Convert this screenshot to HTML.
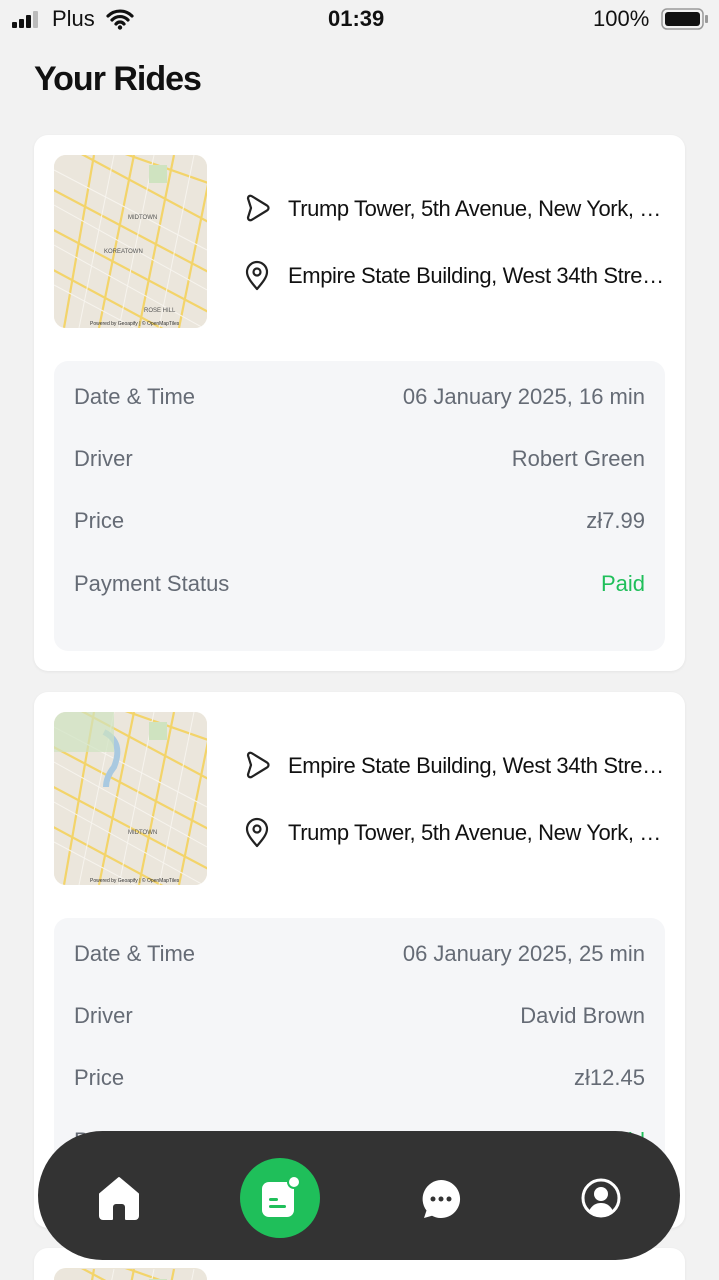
<!DOCTYPE html>
<html style="width:719px;height:1280px;overflow:hidden"><head><meta charset="utf-8"><style>
*{margin:0;padding:0;box-sizing:border-box}
body{width:719px;height:1280px;background:#f2f2f2;font-family:"Liberation Sans",sans-serif;position:relative;overflow:hidden;color:#111}
.abs{position:absolute}
.card{position:absolute;left:34px;width:651px;height:536px;background:#fff;border-radius:14px;box-shadow:0 1px 3px rgba(0,0,0,.06);overflow:hidden}
.map{position:absolute;left:20px;top:20px;width:153px;height:173px;border-radius:12px;overflow:hidden;background:#ece6d8}
.addr{position:absolute;left:254px;width:384px;font-size:22px;letter-spacing:-0.4px;white-space:nowrap;overflow:hidden;text-overflow:ellipsis;color:#111}
.ico{position:absolute;left:208px}
.det{position:absolute;left:20px;top:226px;width:611px;height:290px;background:#f5f6f8;border-radius:14px}
.row{position:absolute;left:20px;right:20px;font-size:22px;color:#656b75;letter-spacing:0}
.row span{position:absolute;right:0;top:0}
.paid{color:#1fbf5a}
</style></head><body>
<div class="abs" style="left:12px;top:11px">
<svg width="34" height="18"><rect x="0" y="11" width="5" height="6" rx="1" fill="#111"/><rect x="7" y="8" width="5" height="9" rx="1" fill="#111"/><rect x="14" y="4" width="5" height="13" rx="1" fill="#111"/><rect x="21" y="0" width="5" height="17" rx="1" fill="#bbb"/></svg></div>
<div class="abs" style="left:52px;top:6px;font-size:22px">Plus</div>
<svg class="abs" style="left:106px;top:8px" width="28" height="22" viewBox="0 0 28 22"><path d="M2 8a17 17 0 0 1 24 0M6 12a11 11 0 0 1 16 0M10 16a5 5 0 0 1 8 0" stroke="#111" stroke-width="3.2" fill="none" stroke-linecap="round"/><circle cx="14" cy="19.5" r="2.2" fill="#111"/></svg>
<div class="abs" style="left:328px;top:6px;font-size:22px;font-weight:bold">01:39</div>
<div class="abs" style="left:593px;top:6px;font-size:22px">100%</div>
<svg class="abs" style="left:661px;top:8px" width="48" height="22"><rect x="1" y="1" width="41" height="20" rx="5" fill="none" stroke="#999" stroke-width="1.5"/><rect x="4" y="4" width="35" height="14" rx="3" fill="#111"/><rect x="44" y="7" width="3" height="8" rx="1" fill="#999"/></svg>
<div class="abs" style="left:34px;top:60px;font-size:34px;font-weight:bold;letter-spacing:-1px">Your Rides</div>

<svg width="0" height="0" style="position:absolute"><defs>
<pattern id="mp" width="153" height="173" patternUnits="userSpaceOnUse">
<rect width="153" height="173" fill="#ebe6dc"/>
<g stroke="#f3d46a" stroke-width="2.2"><path d="M-10 30L160 120M-10 70L160 160M-10 110L120 180M20 -5L160 70M60 -5L160 30"/><path d="M40 0L10 173M80 0L45 173M120 0L85 173M160 0L125 173"/></g>
<g stroke="#f7f4ee" stroke-width="1"><path d="M0 15L153 95M0 50L153 135M0 90L153 175M0 130L100 183"/><path d="M60 0L25 173M100 0L65 173M140 0L105 173"/></g>
<rect x="95" y="10" width="18" height="18" fill="#cfe3c0"/>
</pattern></defs></svg>

<div class="card" style="top:135px">
<div class="map"><svg width="153" height="173"><rect width="153" height="173" fill="url(#mp)"/><text x="74" y="64" font-size="6" fill="#555" font-family="Liberation Sans">MIDTOWN</text><text x="50" y="98" font-size="6" fill="#555" font-family="Liberation Sans">KOREATOWN</text><text x="90" y="157" font-size="6" fill="#555" font-family="Liberation Sans">ROSE HILL</text><text x="36" y="170" font-size="5" fill="#333" font-family="Liberation Sans">Powered by Geoapify | © OpenMapTiles</text></svg></div>
<svg class="ico" style="top:58px" width="30" height="30" viewBox="0 0 30 30"><path d="M6 5.5C6 3 8 2 10 3.3L25 12.5c2 1.3 2 3.7 0 5L10 26.7C8 28 6 27 6 24.5L9 15z" fill="none" stroke="#222" stroke-width="2.2" stroke-linejoin="round"/></svg>
<div class="addr" style="top:61px">Trump Tower, 5th Avenue, New York, NY, USA</div>
<svg class="ico" style="top:125px" width="30" height="32" viewBox="0 0 30 32"><path d="M15 29C9 22 5 17 5 12a10 10 0 0 1 20 0c0 5-4 10-10 17z" fill="none" stroke="#222" stroke-width="2.2" stroke-linejoin="round"/><circle cx="15" cy="12" r="3.5" fill="none" stroke="#222" stroke-width="2.2"/></svg>
<div class="addr" style="top:128px">Empire State Building, West 34th Street, New York</div>
<div class="det">
<div class="row" style="top:23px">Date &amp; Time<span>06 January 2025, 16 min</span></div>
<div class="row" style="top:85px">Driver<span>Robert Green</span></div>
<div class="row" style="top:147px">Price<span>zł7.99</span></div>
<div class="row" style="top:210px">Payment Status<span class="paid">Paid</span></div>
</div></div>

<div class="card" style="top:692px">
<div class="map"><svg width="153" height="173"><rect width="153" height="173" fill="url(#mp)"/><path d="M50 20q20 10 10 35q-8 10-8 20" stroke="#a9c9e0" stroke-width="6" fill="none"/><rect x="0" y="0" width="60" height="40" fill="#cfe3c0" opacity=".7"/><text x="74" y="122" font-size="6" fill="#555" font-family="Liberation Sans">MIDTOWN</text><text x="36" y="170" font-size="5" fill="#333" font-family="Liberation Sans">Powered by Geoapify | © OpenMapTiles</text></svg></div>
<svg class="ico" style="top:58px" width="30" height="30" viewBox="0 0 30 30"><path d="M6 5.5C6 3 8 2 10 3.3L25 12.5c2 1.3 2 3.7 0 5L10 26.7C8 28 6 27 6 24.5L9 15z" fill="none" stroke="#222" stroke-width="2.2" stroke-linejoin="round"/></svg>
<div class="addr" style="top:61px">Empire State Building, West 34th Street, New York</div>
<svg class="ico" style="top:125px" width="30" height="32" viewBox="0 0 30 32"><path d="M15 29C9 22 5 17 5 12a10 10 0 0 1 20 0c0 5-4 10-10 17z" fill="none" stroke="#222" stroke-width="2.2" stroke-linejoin="round"/><circle cx="15" cy="12" r="3.5" fill="none" stroke="#222" stroke-width="2.2"/></svg>
<div class="addr" style="top:128px">Trump Tower, 5th Avenue, New York, NY, USA</div>
<div class="det">
<div class="row" style="top:23px">Date &amp; Time<span>06 January 2025, 25 min</span></div>
<div class="row" style="top:85px">Driver<span>David Brown</span></div>
<div class="row" style="top:147px">Price<span>zł12.45</span></div>
<div class="row" style="top:210px">Payment Status<span class="paid">Paid</span></div>
</div></div>

<div class="card" style="top:1248px;height:32px;border-radius:14px 14px 0 0">
<div class="map" style="height:12px;border-radius:12px 12px 0 0"><svg width="153" height="12"><rect width="153" height="12" fill="url(#mp)"/></svg></div>
</div>

<div class="abs" style="left:38px;top:1131px;width:642px;height:129px;background:#333;border-radius:65px"></div>
<svg class="abs" style="left:98px;top:1176px" width="42" height="44" viewBox="0 0 42 44"><path d="M21 2L40 18v22a3 3 0 0 1-3 3H28V31a4 4 0 0 0-4-4h-6a4 4 0 0 0-4 4v12H5a3 3 0 0 1-3-3V18z" fill="#fff" stroke="#fff" stroke-width="2" stroke-linejoin="round"/></svg>
<div class="abs" style="left:240px;top:1158px;width:80px;height:80px;border-radius:50%;background:#1fbf5a"></div>
<svg class="abs" style="left:258px;top:1176px" width="46" height="44" viewBox="0 0 46 44"><rect x="4" y="6" width="32" height="35" rx="7" fill="#fff"/><rect x="11" y="22" width="9" height="3" rx="1.5" fill="#1fbf5a"/><rect x="11" y="29" width="17" height="3" rx="1.5" fill="#1fbf5a"/><circle cx="36" cy="6" r="7" fill="#1fbf5a"/><circle cx="36" cy="6" r="5" fill="#fff"/></svg>
<svg class="abs" style="left:420px;top:1178px" width="42" height="42" viewBox="0 0 42 42"><path d="M21 2a19 19 0 1 1-9 35.7L4 40l2.5-7.5A19 19 0 0 1 21 2z" fill="#fff"/><circle cx="13" cy="21" r="2.5" fill="#333"/><circle cx="21" cy="21" r="2.5" fill="#333"/><circle cx="29" cy="21" r="2.5" fill="#333"/></svg>
<svg class="abs" style="left:580px;top:1177px" width="42" height="42" viewBox="0 0 42 42"><circle cx="21" cy="21" r="18" fill="none" stroke="#fff" stroke-width="3"/><circle cx="21" cy="17" r="7" fill="#fff"/><path d="M9 34c3-6 7-8 12-8s9 2 12 8a18 18 0 0 1-24 0z" fill="#fff"/></svg>
</body></html>
